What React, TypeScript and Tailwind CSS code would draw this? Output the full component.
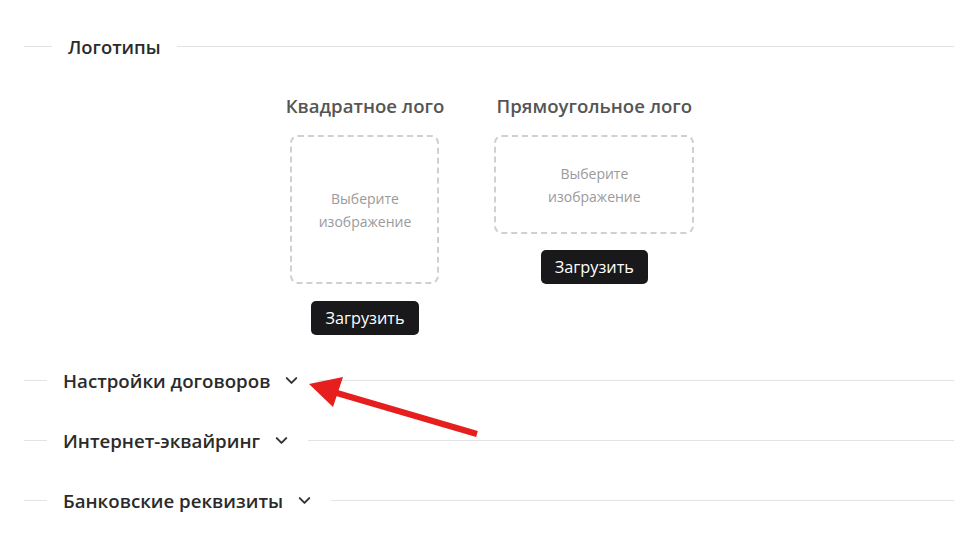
import { ChevronDown } from 'lucide-react';

// Divider heading with a short line on the left and a long line on the right
function Divider({ title, lead, collapsible }: { title: string; lead: string; collapsible?: boolean }) {
  return (
    <div className="flex items-center">
      <div className={`h-px ${lead} bg-[#e3e3e3]`} />
      <div className="ml-4 flex items-center">
        <span className={`${collapsible ? 'text-[18.7px]' : 'text-[18.4px]'} font-semibold leading-[27px] text-[#2b2b2b]`}>
          {title}
        </span>
        {collapsible && <ChevronDown className="ml-[12px] h-[19px] w-[19px] text-[#333]" strokeWidth={2.5} />}
      </div>
      <div className={`h-px flex-1 bg-[#e3e3e3] ${collapsible ? 'ml-[17px]' : 'ml-4'}`} />
    </div>
  );
}

function LogoSlot({ title, box, gap }: { title: string; box: string; gap: string }) {
  return (
    <div className="flex flex-col items-center">
      <h3 className="text-[18.6px] font-semibold leading-[24px] text-[#555]">{title}</h3>
      <div
        className={`mt-[17px] flex ${box} items-center justify-center rounded-lg border-2 border-dashed border-[#d0d0d0] text-center text-[14px] leading-[23px] text-[#9a9a9a]`}
      >
        Выберите
        <br />
        изображение
      </div>
      <button className={`${gap} rounded-[5px] bg-[#19191b] px-[14px] py-[5px] text-[16.3px] leading-[24px] text-white`}>
        Загрузить
      </button>
    </div>
  );
}

export default function App() {
  return (
    <div className="relative h-[557px] w-[978px] bg-white px-6 font-['Open_Sans',sans-serif]">
      <div className="pt-[33px]">
        <Divider title="Логотипы" lead="w-[28px]" />
      </div>

      <div className="mt-[34px] flex justify-center gap-[50px] pl-[2px]">
        <LogoSlot title="Квадратное лого" box="h-[149px] w-[149px]" gap="mt-[17px]" />
        <LogoSlot title="Прямоугольное лого" box="h-[99px] w-[200px]" gap="mt-4" />
      </div>

      <div className="mt-[32px] flex flex-col gap-[33px]">
        <Divider title="Настройки договоров" lead="w-[23px]" collapsible />
        <Divider title="Интернет-эквайринг" lead="w-[23px]" collapsible />
        <Divider title="Банковские реквизиты" lead="w-[23px]" collapsible />
      </div>

      {/* annotation arrow */}
      <svg className="pointer-events-none absolute left-0 top-0" width="978" height="557">
        <line x1="477" y1="434" x2="330" y2="391" stroke="#e61e1e" strokeWidth="6" />
        <polygon points="309,384 343,377 333,407" fill="#e61e1e" />
      </svg>
    </div>
  );
}
